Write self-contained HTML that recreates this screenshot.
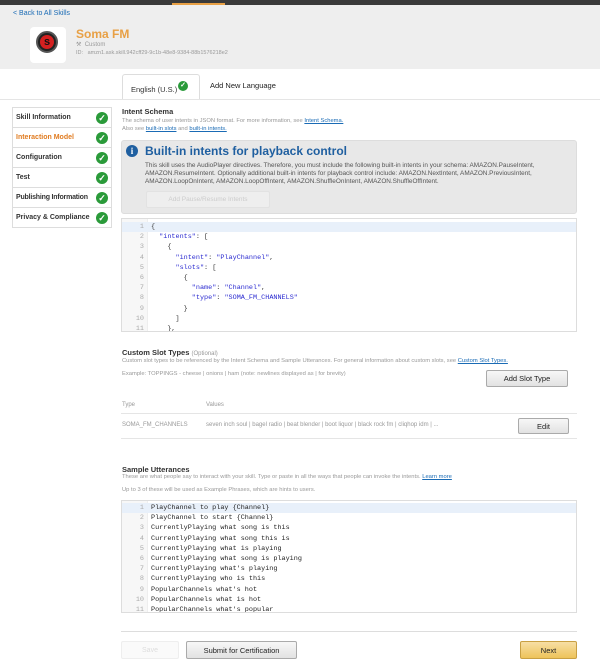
<!DOCTYPE html>
<html><head><meta charset="utf-8"><style>
*{box-sizing:border-box;margin:0;padding:0}
body{width:600px;height:667px;overflow:hidden;background:#fff;font-family:"Liberation Sans",sans-serif;position:relative;color:#333}
.a{position:absolute}
.lnk{color:#1a6bb5;text-decoration:underline}
.g{color:#999}
.ed{position:absolute;border:1px solid #ddd;background:#fff;overflow:hidden;font-family:"Liberation Mono",monospace;font-size:6.8px}
.ed .ln{position:absolute;left:0;width:22px;text-align:right;color:#aaa}
.ed .tx{position:absolute;left:29px}
.ed .row{height:10.2px;line-height:10.2px;white-space:pre;position:relative}
.ed .gut{position:absolute;left:0;top:0;bottom:0;width:26px;background:#f7f7f7;border-right:1px solid #eee}
.ck{position:absolute;width:12px;height:12px;border-radius:50%;background:#2a9a3a;color:#fff;font-size:9px;line-height:12px;text-align:center;font-weight:bold}
.side div.it{height:20px;border-bottom:1px solid #ddd;font-size:7px;font-weight:bold;line-height:19px;padding-left:3px;position:relative}
.btn{position:absolute;border:1px solid #aaa;border-radius:2px;background:linear-gradient(#f7f7f7,#e2e2e2);font-size:7.5px;text-align:center;color:#222}
</style></head><body>
<div class="a" style="left:0;top:0;width:600px;height:5px;background:#3a3a3a"></div>
<div class="a" style="left:172px;top:3px;width:53px;height:2px;background:#e8a045"></div>
<div class="a" style="left:0;top:5px;width:600px;height:64px;background:#eeeeee"></div>
<div class="a" style="left:13px;top:10px;font-size:7px;color:#1a6bb5">&lt; Back to All Skills</div>
<div class="a" style="left:30px;top:27px;width:36px;height:36px;background:#fff;border-radius:4px"></div>
<div class="a" style="left:36px;top:31px;width:22px;height:22px;border-radius:50%;background:#222;border:2px solid #555"></div>
<div class="a" style="left:40px;top:35px;width:14px;height:14px;border-radius:50%;background:#d42020;color:#111;font-weight:bold;font-size:11px;line-height:14px;text-align:center">s</div>
<div class="a" style="left:76px;top:27px;font-size:12px;font-weight:bold;color:#e8a045">Soma FM</div>
<div class="a" style="left:76px;top:41px;font-size:6px;color:#999">&#9874;&nbsp; Custom</div>
<div class="a" style="left:76px;top:50px;font-size:5.5px;color:#999">ID:&nbsp;&nbsp; amzn1.ask.skill.942cff29-9c1b-48e8-9384-88b1576218e2</div>
<div class="a" style="left:122px;top:74px;width:78px;height:26px;background:#fff;border:1px solid #ddd;border-bottom:none;border-radius:3px 3px 0 0;font-size:7.5px;padding:10px 0 0 8px">English (U.S.)</div>
<div class="ck" style="left:178px;top:81px;width:10px;height:10px;line-height:10px;font-size:7px">✓</div>
<div class="a" style="left:210px;top:81px;font-size:7.5px;color:#222">Add New Language</div>
<div class="a" style="left:0;top:99px;width:600px;height:1px;background:#e5e5e5"></div>
<div class="a side" style="left:12px;top:107px;width:100px;border:1px solid #ddd;border-bottom:none">
<div class="it">Skill Information<span class="ck" style="right:3px;top:4px">✓</span></div>
<div class="it" style="color:#e07b20">Interaction Model<span class="ck" style="right:3px;top:4px">✓</span></div>
<div class="it">Configuration<span class="ck" style="right:3px;top:4px">✓</span></div>
<div class="it">Test<span class="ck" style="right:3px;top:4px">✓</span></div>
<div class="it" style="letter-spacing:-0.2px">Publishing Information<span class="ck" style="right:3px;top:4px;letter-spacing:0">✓</span></div>
<div class="it">Privacy &amp; Compliance<span class="ck" style="right:3px;top:4px">✓</span></div>
</div>
<div class="a" style="left:122px;top:107px;font-size:7.5px;font-weight:bold">Intent Schema</div>
<div class="a g" style="left:122px;top:117px;font-size:5.8px;line-height:8px">The schema of user intents in JSON format. For more information, see <span class="lnk">Intent Schema.</span><br>Also see <span class="lnk">built-in slots</span> and <span class="lnk">built-in intents.</span></div>
<div class="a" style="left:121px;top:140px;width:456px;height:74px;background:#e8e8e8;border:1px solid #ddd;border-radius:3px"></div>
<div class="a" style="left:126px;top:145px;width:12px;height:12px;border-radius:50%;background:#1f5fa0;color:#fff;font-weight:bold;font-size:9px;line-height:12px;text-align:center;font-family:'Liberation Serif',serif">i</div>
<div class="a" style="left:145px;top:144px;font-size:12px;font-weight:bold;color:#1f5fa0">Built-in intents for playback control</div>
<div class="a" style="left:145px;top:162px;font-size:6.4px;line-height:8px;color:#555;width:430px">This skill uses the AudioPlayer directives. Therefore, you must include the following built-in intents in your schema: AMAZON.PauseIntent, AMAZON.ResumeIntent. Optionally additional built-in intents for playback control include: AMAZON.NextIntent, AMAZON.PreviousIntent, AMAZON.LoopOnIntent, AMAZON.LoopOffIntent, AMAZON.ShuffleOnIntent, AMAZON.ShuffleOffIntent.</div>
<div class="a" style="left:146px;top:191px;width:124px;height:17px;background:#eee;border:1px solid #e2e2e2;border-radius:2px;font-size:6.5px;color:#ccc;text-align:center;line-height:16px">Add Pause/Resume Intents</div>
<div class="ed" style="left:121px;top:218px;width:456px;height:114px">
<div class="gut"></div>
<div style="position:absolute;left:0;right:0;top:3px">
<div class="row" style="background:#e8f0fa"><span class="ln">1</span><span class="tx">{</span></div>
<div class="row"><span class="ln">2</span><span class="tx">  <span style="color:#2a2ad0">"intents"</span>: [</span></div>
<div class="row"><span class="ln">3</span><span class="tx">    {</span></div>
<div class="row"><span class="ln">4</span><span class="tx">      <span style="color:#2a2ad0">"intent"</span>: <span style="color:#2a2ad0">"PlayChannel"</span>,</span></div>
<div class="row"><span class="ln">5</span><span class="tx">      <span style="color:#2a2ad0">"slots"</span>: [</span></div>
<div class="row"><span class="ln">6</span><span class="tx">        {</span></div>
<div class="row"><span class="ln">7</span><span class="tx">          <span style="color:#2a2ad0">"name"</span>: <span style="color:#2a2ad0">"Channel"</span>,</span></div>
<div class="row"><span class="ln">8</span><span class="tx">          <span style="color:#2a2ad0">"type"</span>: <span style="color:#2a2ad0">"SOMA_FM_CHANNELS"</span></span></div>
<div class="row"><span class="ln">9</span><span class="tx">        }</span></div>
<div class="row"><span class="ln">10</span><span class="tx">      ]</span></div>
<div class="row"><span class="ln">11</span><span class="tx">    },</span></div>
</div></div>
<div class="a" style="left:122px;top:348px;font-size:7.5px;font-weight:bold">Custom Slot Types <span style="font-weight:normal;color:#999;font-size:6px">(Optional)</span></div>
<div class="a g" style="left:122px;top:358px;font-size:5.8px">Custom slot types to be referenced by the Intent Schema and Sample Utterances. For general information about custom slots, see <span class="lnk">Custom Slot Types.</span></div>
<div class="a g" style="left:122px;top:371px;font-size:5.8px">Example: TOPPINGS - cheese | onions | ham (note: newlines displayed as | for brevity)</div>
<div class="btn" style="left:486px;top:370px;width:82px;height:17px;line-height:16px">Add Slot Type</div>
<div class="a g" style="left:122px;top:402px;font-size:6px">Type</div>
<div class="a g" style="left:206px;top:402px;font-size:6px">Values</div>
<div class="a" style="left:121px;top:413px;width:456px;height:1px;background:#e5e5e5"></div>
<div class="a g" style="left:122px;top:422px;font-size:6px">SOMA_FM_CHANNELS</div>
<div class="a g" style="left:206px;top:422px;font-size:6px">seven inch soul | bagel radio | beat blender | boot liquor | black rock fm | cliqhop idm | ...</div>
<div class="btn" style="left:518px;top:418px;width:51px;height:16px;line-height:15px">Edit</div>
<div class="a" style="left:121px;top:438px;width:456px;height:1px;background:#e5e5e5"></div>
<div class="a" style="left:122px;top:465px;font-size:7.5px;font-weight:bold">Sample Utterances</div>
<div class="a g" style="left:122px;top:474px;font-size:5.8px">These are what people say to interact with your skill. Type or paste in all the ways that people can invoke the intents. <span class="lnk">Learn more</span></div>
<div class="a g" style="left:122px;top:487px;font-size:5.8px">Up to 3 of these will be used as Example Phrases, which are hints to users.</div>
<div class="ed" style="left:121px;top:500px;width:456px;height:113px;color:#222">
<div class="gut"></div>
<div style="position:absolute;left:0;right:0;top:2px">
<div class="row" style="background:#e8f0fa"><span class="ln">1</span><span class="tx">PlayChannel to play {Channel}</span></div>
<div class="row"><span class="ln">2</span><span class="tx">PlayChannel to start {Channel}</span></div>
<div class="row"><span class="ln">3</span><span class="tx">CurrentlyPlaying what song is this</span></div>
<div class="row"><span class="ln">4</span><span class="tx">CurrentlyPlaying what song this is</span></div>
<div class="row"><span class="ln">5</span><span class="tx">CurrentlyPlaying what is playing</span></div>
<div class="row"><span class="ln">6</span><span class="tx">CurrentlyPlaying what song is playing</span></div>
<div class="row"><span class="ln">7</span><span class="tx">CurrentlyPlaying what's playing</span></div>
<div class="row"><span class="ln">8</span><span class="tx">CurrentlyPlaying who is this</span></div>
<div class="row"><span class="ln">9</span><span class="tx">PopularChannels what's hot</span></div>
<div class="row"><span class="ln">10</span><span class="tx">PopularChannels what is hot</span></div>
<div class="row"><span class="ln">11</span><span class="tx">PopularChannels what's popular</span></div>
</div></div>
<div class="a" style="left:121px;top:631px;width:456px;height:1px;background:#ddd"></div>
<div class="a" style="left:121px;top:641px;width:58px;height:18px;border:1px solid #eee;border-radius:2px;background:#fafafa;font-size:7px;color:#ddd;text-align:center;line-height:17px">Save</div>
<div class="btn" style="left:186px;top:641px;width:111px;height:18px;line-height:17px">Submit for Certification</div>
<div class="btn" style="left:520px;top:641px;width:57px;height:18px;line-height:17px;background:linear-gradient(#f7dfa5,#eec35a);border-color:#c9a043">Next</div>
</body></html>
